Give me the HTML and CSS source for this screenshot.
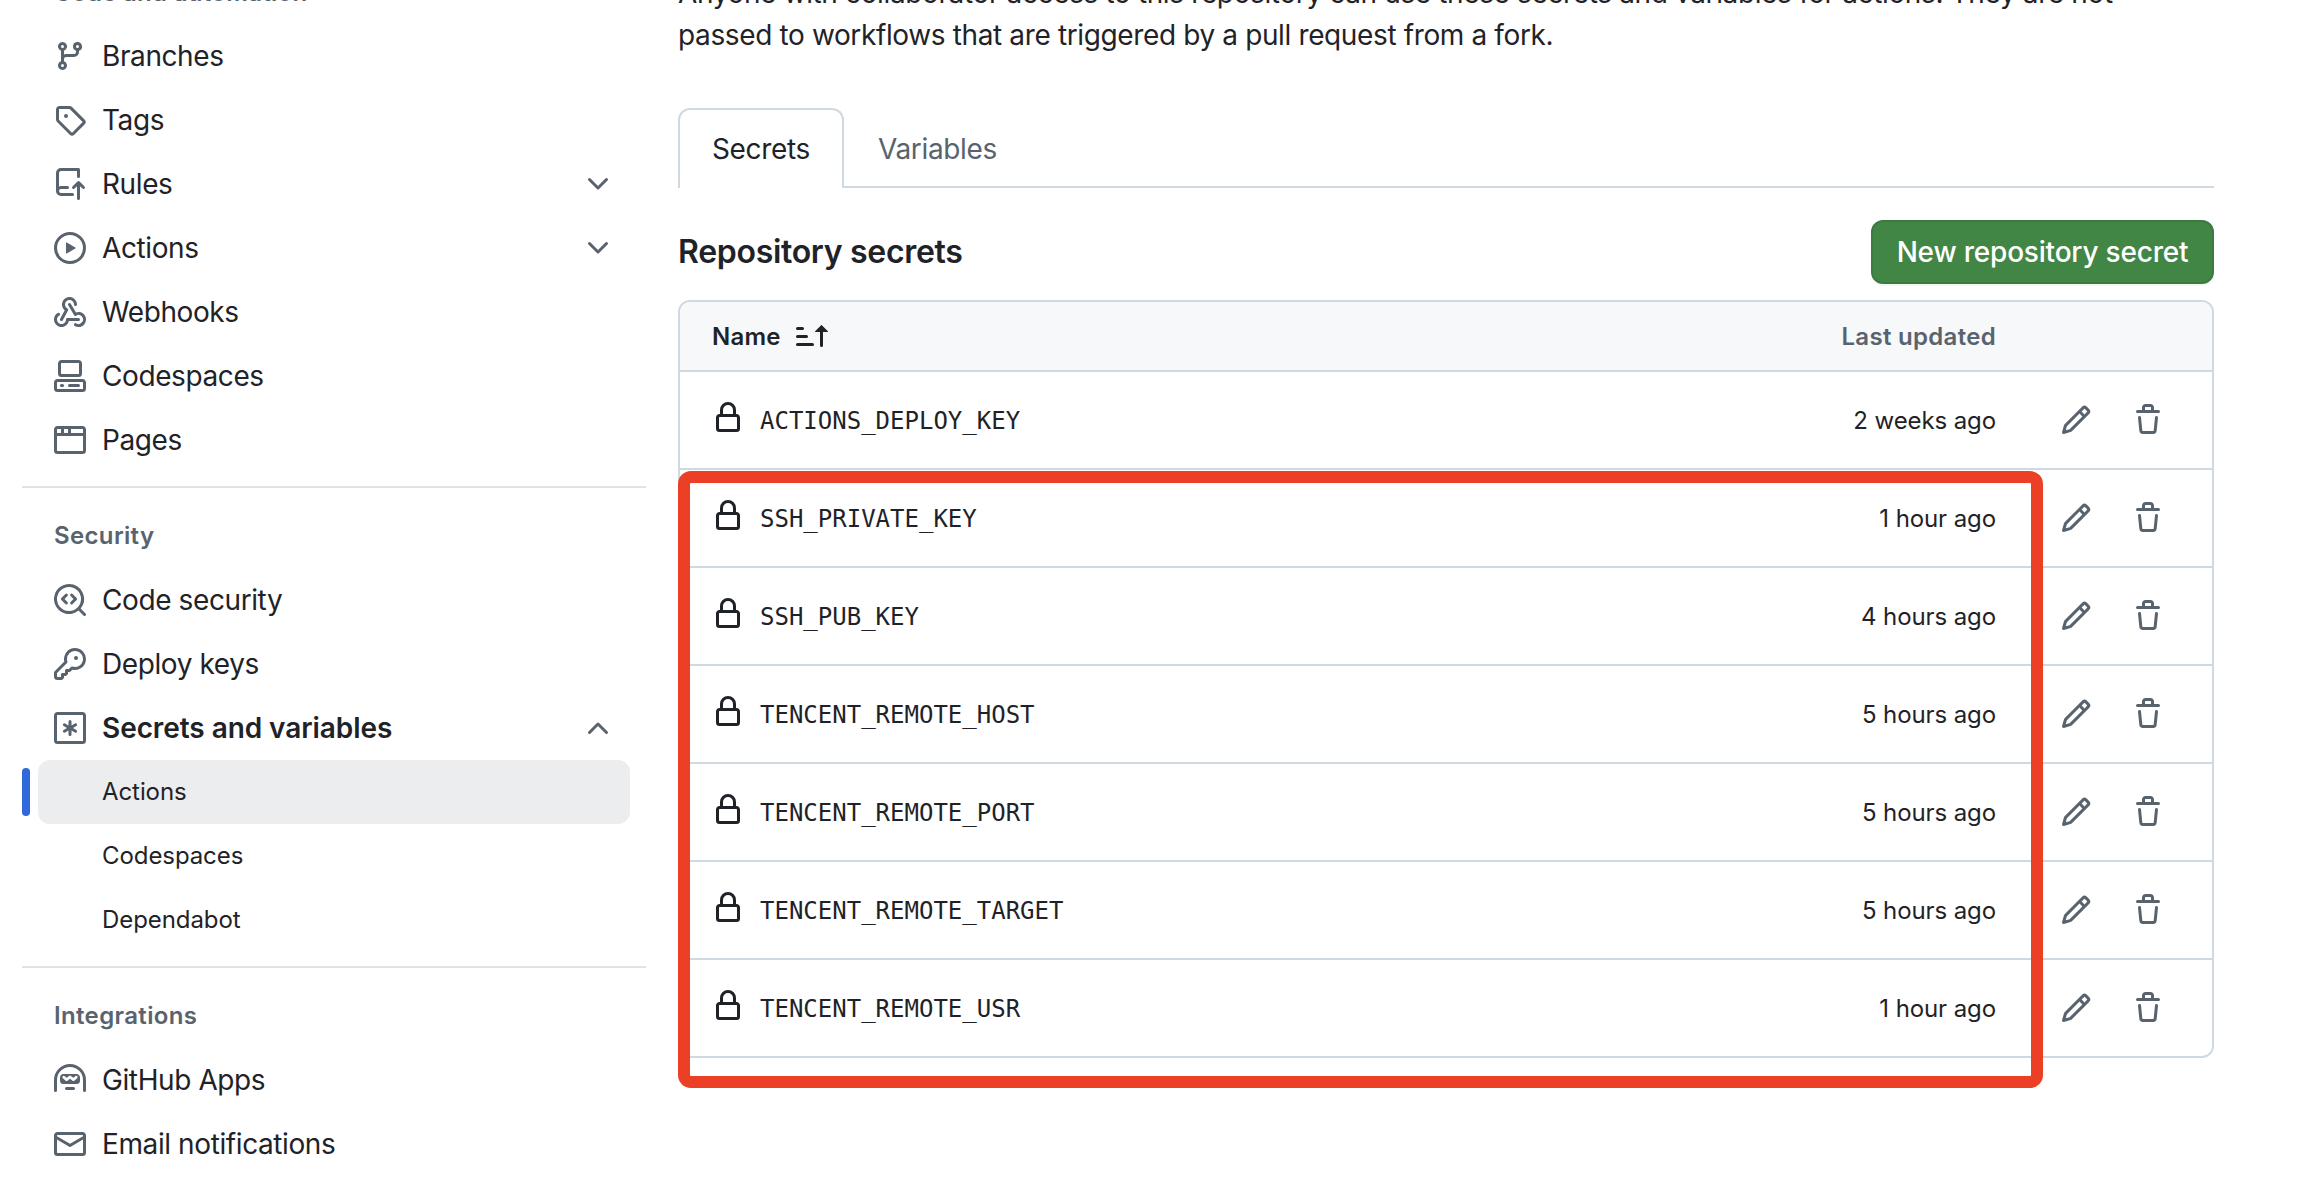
FILE: index.html
```html
<!DOCTYPE html>
<html lang="en">
<head>
<meta charset="utf-8">
<title>Actions secrets</title>
<link rel="stylesheet" href="styles.css">
</head>
<body>
<svg class="sprite" aria-hidden="true">
  <symbol id="lock" viewBox="0 0 16 16"><path d="M4 4a4 4 0 0 1 8 0v2h.25c.966 0 1.75.784 1.75 1.75v5.5A1.75 1.75 0 0 1 12.25 15h-8.500A1.750 1.750 0 0 1 2 13.250v-5.500C2 6.784 2.784 6 3.750 6H4Zm8.250 3.500h-8.500a.25.25 0 0 0-.25.25v5.500c0 .138.112.25.25.25h8.500a.25.25 0 0 0 .25-.25v-5.500a.25.25 0 0 0-.25-.25ZM10.500 6V4a2.500 2.500 0 1 0-5 0v2Z"/></symbol>
  <symbol id="pencil" viewBox="0 0 16 16"><path d="M11.013 1.427a1.750 1.750 0 0 1 2.474 0l1.086 1.086a1.750 1.750 0 0 1 0 2.474l-8.610 8.610c-.21.21-.47.364-.756.445l-3.251.93a.75.75 0 0 1-.927-.928l.929-3.250c.081-.286.235-.547.445-.758l8.610-8.610Zm.176 4.823L9.750 4.810l-6.286 6.287a.253.253 0 0 0-.064.108l-.558 1.953 1.953-.558a.253.253 0 0 0 .108-.064Zm1.238-3.763a.25.25 0 0 0-.354 0L10.811 3.750l1.439 1.440 1.263-1.263a.25.25 0 0 0 0-.354Z"/></symbol>
  <symbol id="trash" viewBox="0 0 16 16"><path d="M11 1.750V3h2.250a.75.75 0 0 1 0 1.500H2.750a.75.75 0 0 1 0-1.500H5V1.750C5 .784 5.784 0 6.750 0h2.500C10.216 0 11 .784 11 1.750ZM4.496 6.675l.66 6.600a.25.25 0 0 0 .249.225h5.190a.25.25 0 0 0 .249-.225l.66-6.600a.75.75 0 0 1 1.492.149l-.66 6.600A1.748 1.748 0 0 1 10.595 15h-5.190a1.750 1.750 0 0 1-1.741-1.575l-.66-6.600a.75.75 0 1 1 1.492-.15ZM6.500 1.750V3h3V1.750a.25.25 0 0 0-.25-.25h-2.500a.25.25 0 0 0-.25.25Z"/></symbol>
  <symbol id="chevron" viewBox="0 0 16 16"><path d="M12.780 5.220a.749.749 0 0 1 0 1.060l-4.250 4.250a.749.749 0 0 1-1.060 0L3.220 6.280a.749.749 0 1 1 1.060-1.060L8 8.939l3.720-3.719a.749.749 0 0 1 1.060 0Z"/></symbol>
</svg>

<div class="page">
  <nav class="sidebar">
    <div class="item cut"><span>Code and automation</span></div>
    <a class="item"><svg class="icon" viewBox="0 0 16 16"><path d="M9.500 3.250a2.250 2.250 0 1 1 3 2.122V6A2.500 2.500 0 0 1 10 8.500H6a1 1 0 0 0-1 1v1.128a2.251 2.251 0 1 1-1.500 0V5.372a2.250 2.250 0 1 1 1.500 0v1.836A2.493 2.493 0 0 1 6 7h4a1 1 0 0 0 1-1v-.628A2.250 2.250 0 0 1 9.500 3.250Zm-6 0a.75.75 0 1 0 1.500 0 .75.75 0 0 0-1.500 0Zm8.250-.75a.75.75 0 1 0 0 1.500.75.75 0 0 0 0-1.500ZM4.250 12a.75.75 0 1 0 0 1.500.75.75 0 0 0 0-1.500Z"/></svg><span>Branches</span></a>
    <a class="item"><svg class="icon" viewBox="0 0 16 16"><path d="M1 7.775V2.750C1 1.784 1.784 1 2.750 1h5.025c.464 0 .91.184 1.238.513l6.250 6.250a1.750 1.750 0 0 1 0 2.474l-5.026 5.026a1.750 1.750 0 0 1-2.474 0l-6.250-6.250A1.752 1.752 0 0 1 1 7.775Zm1.500 0c0 .066.026.13.073.177l6.250 6.250a.25.25 0 0 0 .354 0l5.025-5.025a.25.25 0 0 0 0-.354l-6.250-6.250a.25.25 0 0 0-.177-.073H2.750a.25.25 0 0 0-.25.25ZM6 5a1 1 0 1 1 0 2 1 1 0 0 1 0-2Z"/></svg><span>Tags</span></a>
    <a class="item"><svg class="icon" viewBox="0 0 16 16"><path d="M1 2.500A2.500 2.500 0 0 1 3.500 0h8.750a.75.75 0 0 1 .75.75v3.500a.75.75 0 0 1-1.500 0V1.500h-8a1 1 0 0 0-1 1v6.708A2.493 2.493 0 0 1 3.500 9h3.250a.75.75 0 0 1 0 1.500H3.500a1 1 0 0 0 0 2h5.750a.75.75 0 0 1 0 1.500H3.500A2.500 2.500 0 0 1 1 11.500Zm13.230 7.790-1.230-1.224v6.184a.75.75 0 0 1-1.500 0V9.066L10.280 10.290a.75.75 0 0 1-1.060-1.061l2.505-2.504a.75.75 0 0 1 1.060 0L15.290 9.230a.751.751 0 0 1-1.060 1.060Z"/></svg><span>Rules</span><svg class="icon chev"><use href="#chevron"/></svg></a>
    <a class="item"><svg class="icon" viewBox="0 0 16 16"><path d="M8 0a8 8 0 1 1 0 16A8 8 0 0 1 8 0ZM1.500 8a6.500 6.500 0 1 0 13 0 6.500 6.500 0 0 0-13 0Zm4.879-2.773 4.264 2.559a.25.25 0 0 1 0 .428l-4.264 2.559A.25.25 0 0 1 6 10.559V5.442a.25.25 0 0 1 .379-.215Z"/></svg><span>Actions</span><svg class="icon chev"><use href="#chevron"/></svg></a>
    <a class="item"><svg class="icon" viewBox="0 0 16 16"><path d="M5.500 4.250a2.250 2.250 0 0 1 4.500 0 .75.75 0 0 0 1.500 0 3.750 3.750 0 1 0-6.140 2.889l-2.272 4.258a.75.75 0 0 0 1.324.706L7 7.250a.75.75 0 0 0-.309-1.015A2.250 2.250 0 0 1 5.500 4.250Z"/><path d="M7.364 3.607a.75.75 0 0 1 1.030.257l2.608 4.349a3.750 3.750 0 1 1-.628 6.785.75.75 0 0 1 .752-1.299 2.250 2.250 0 1 0-.033-3.880.75.75 0 0 1-1.030-.256L7.107 4.636a.75.75 0 0 1 .257-1.030Z"/><path d="M2.900 8.776A.75.75 0 0 1 2.625 9.800 2.250 2.250 0 1 0 6 11.750a.75.75 0 0 1 .75-.751h5.500a.75.75 0 0 1 0 1.500H7.425a3.751 3.751 0 1 1-5.550-3.998.75.75 0 0 1 1.024.274Z"/></svg><span>Webhooks</span></a>
    <a class="item"><svg class="icon" viewBox="0 0 16 16"><path d="M0 11.250c0-.966.784-1.750 1.750-1.750h12.500c.966 0 1.750.784 1.750 1.750v3A1.750 1.750 0 0 1 14.250 16H1.750A1.750 1.750 0 0 1 0 14.250Zm2-9.500C2 .784 2.784 0 3.750 0h8.500C13.216 0 14 .784 14 1.750v5a1.750 1.750 0 0 1-1.750 1.750h-8.500A1.750 1.750 0 0 1 2 6.750Zm1.750-.25a.25.25 0 0 0-.25.25v5c0 .138.112.25.25.25h8.500a.25.25 0 0 0 .25-.25v-5a.25.25 0 0 0-.25-.25Zm-2 9.500a.25.25 0 0 0-.25.25v3c0 .138.112.25.25.25h12.500a.25.25 0 0 0 .25-.25v-3a.25.25 0 0 0-.25-.25Z"/><path d="M7 12.750a.75.75 0 0 1 .75-.75h4.500a.75.75 0 0 1 0 1.500h-4.500a.75.75 0 0 1-.75-.75Zm-4 0a.75.75 0 0 1 .75-.75h.5a.75.75 0 0 1 0 1.500h-.5a.75.75 0 0 1-.75-.75Z"/></svg><span>Codespaces</span></a>
    <a class="item"><svg class="icon" viewBox="0 0 16 16"><path d="M0 2.750C0 1.784.784 1 1.750 1h12.500c.966 0 1.750.784 1.750 1.750v10.500A1.750 1.750 0 0 1 14.250 15H1.750A1.750 1.750 0 0 1 0 13.250ZM14.500 6h-13v7.250c0 .138.112.25.25.25h12.500a.25.25 0 0 0 .25-.25Zm-6-3.500v2h6V2.750a.25.25 0 0 0-.25-.25ZM5 2.500v2h2v-2Zm-3.250 0a.25.25 0 0 0-.25.25V4.500h2v-2Z"/></svg><span>Pages</span></a>
    <div class="divider"></div>
    <h3 class="group">Security</h3>
    <a class="item"><svg class="icon" viewBox="0 0 16 16"><path d="M8.280 4.970a.749.749 0 0 1 1.060 0l2 2a.749.749 0 0 1 0 1.060l-2 2a.749.749 0 1 1-1.060-1.060L9.750 7.500 8.280 6.030a.749.749 0 0 1 0-1.060ZM6.720 6.030a.749.749 0 1 0-1.060-1.060l-2 2a.749.749 0 0 0 0 1.060l2 2a.749.749 0 1 0 1.060-1.060L5.250 7.500Z"/><path d="M7.500 0a7.500 7.500 0 0 1 5.807 12.247l2.473 2.473a.749.749 0 1 1-1.060 1.060l-2.473-2.473A7.500 7.500 0 1 1 7.500 0Zm-6 7.500a6 6 0 1 0 12 0 6 6 0 0 0-12 0Z"/></svg><span>Code security</span></a>
    <a class="item"><svg class="icon" viewBox="0 0 16 16"><path d="M10.500 0a5.499 5.499 0 1 1-1.288 10.848l-.932.932a.749.749 0 0 1-.53.22H7v.75a.749.749 0 0 1-.22.53l-.5.5a.749.749 0 0 1-.53.22H5v.75a.749.749 0 0 1-.22.53l-.5.5a.749.749 0 0 1-.53.22h-2A1.750 1.750 0 0 1 0 14.250v-2c0-.199.079-.389.22-.53l4.932-4.932A5.500 5.500 0 0 1 10.500 0Zm-4 5.500c-.001.431.069.86.205 1.269a.75.75 0 0 1-.181.768L1.500 12.560v1.690c0 .138.112.25.25.25h1.690l.06-.06v-1.190a.75.75 0 0 1 .75-.75h1.190l.06-.06v-1.190a.75.75 0 0 1 .75-.75h1.190l1.023-1.025a.75.75 0 0 1 .768-.18A4 4 0 1 0 6.500 5.500ZM11 6a1 1 0 1 1 0-2 1 1 0 0 1 0 2Z"/></svg><span>Deploy keys</span></a>
    <a class="item bold"><svg class="icon" viewBox="0 0 16 16"><path d="M0 1.750C0 .784.784 0 1.750 0h12.500C15.216 0 16 .784 16 1.750v12.500A1.750 1.750 0 0 1 14.250 16H1.750A1.750 1.750 0 0 1 0 14.250Zm1.750-.25a.25.25 0 0 0-.25.25v12.500c0 .138.112.25.25.25h12.500a.25.25 0 0 0 .25-.25V1.750a.25.25 0 0 0-.25-.25Z"/><path d="M8 4a.75.75 0 0 1 .75.75V6.700l1.690-.975a.75.75 0 0 1 .75 1.300L9.500 8l1.690.976a.75.75 0 0 1-.75 1.298L8.750 9.300v1.951a.75.75 0 0 1-1.500 0V9.299l-1.690.976a.75.75 0 0 1-.75-1.300L6.500 8l-1.690-.975a.75.75 0 0 1 .75-1.300l1.690.976V4.750A.75.75 0 0 1 8 4Z"/></svg><span>Secrets and variables</span><svg class="icon chev up"><use href="#chevron"/></svg></a>
    <a class="item sub active">Actions</a>
    <a class="item sub">Codespaces</a>
    <a class="item sub">Dependabot</a>
    <div class="divider"></div>
    <h3 class="group">Integrations</h3>
    <a class="item"><svg class="icon" viewBox="0 0 16 16"><path d="M0 8a8 8 0 1 1 16 0v5.250a.75.75 0 0 1-1.500 0V8a6.500 6.500 0 1 0-13 0v5.250a.75.75 0 0 1-1.500 0Zm5.500 4.250a.75.75 0 0 1 .75-.75h3.500a.75.75 0 0 1 0 1.500h-3.500a.75.75 0 0 1-.75-.75ZM3 6.750C3 5.784 3.784 5 4.750 5h6.500c.966 0 1.750.784 1.750 1.750v1.500A1.750 1.750 0 0 1 11.250 10h-6.500A1.750 1.750 0 0 1 3 8.250Z"/><path class="visor" d="M4.900 6.600 6.300 7.800 8 6.500 9.700 7.800 11.100 6.600"/></svg><span>GitHub Apps</span></a>
    <a class="item"><svg class="icon" viewBox="0 0 16 16"><path d="M1.750 2h12.500c.966 0 1.750.784 1.750 1.750v8.500A1.750 1.750 0 0 1 14.250 14H1.750A1.750 1.750 0 0 1 0 12.250v-8.500C0 2.784.784 2 1.750 2ZM1.500 12.251c0 .138.112.25.25.25h12.500a.25.25 0 0 0 .25-.25V5.809L8.380 9.397a.75.75 0 0 1-.76 0L1.500 5.809v6.442Zm13-8.181v-.32a.25.25 0 0 0-.25-.25H1.750a.25.25 0 0 0-.25.25v.32L8 7.880Z"/></svg><span>Email notifications</span></a>
  </nav>

  <main class="main">
    <p class="intro"><span class="line1">Anyone with collaborator access to this repository can use these secrets and variables for actions. They are not</span><br><span class="line2">passed to workflows that are triggered by a pull request from a fork.</span></p>
    <div class="tabs"><a class="tab selected">Secrets</a><a class="tab">Variables</a></div>
    <div class="heading"><h2>Repository secrets</h2><button class="new">New repository secret</button></div>
    <div class="table">
      <div class="thead"><span class="name">Name</span><svg class="icon sort" viewBox="0 0 16 16"><path d="m12.927 2.573 3 3A.25.25 0 0 1 15.750 6H13.500v6.750a.75.75 0 0 1-1.500 0V6H9.750a.25.25 0 0 1-.177-.427l3-3a.25.25 0 0 1 .354 0ZM0 12.250a.75.75 0 0 1 .75-.75h7.500a.75.75 0 0 1 0 1.500H.75a.75.75 0 0 1-.75-.75Zm0-4a.75.75 0 0 1 .75-.75h4.500a.75.75 0 0 1 0 1.500H.75A.75.75 0 0 1 0 8.250Zm0-4a.75.75 0 0 1 .75-.75h2.500a.75.75 0 0 1 0 1.500H.75A.75.75 0 0 1 0 4.250Z"/></svg><span class="updated">Last updated</span></div>
      <div class="row"><svg class="icon lock"><use href="#lock"/></svg><code>ACTIONS_DEPLOY_KEY</code><span class="when">2 weeks ago</span><svg class="icon edit"><use href="#pencil"/></svg><svg class="icon del"><use href="#trash"/></svg></div>
      <div class="row"><svg class="icon lock"><use href="#lock"/></svg><code>SSH_PRIVATE_KEY</code><span class="when">1 hour ago</span><svg class="icon edit"><use href="#pencil"/></svg><svg class="icon del"><use href="#trash"/></svg></div>
      <div class="row"><svg class="icon lock"><use href="#lock"/></svg><code>SSH_PUB_KEY</code><span class="when">4 hours ago</span><svg class="icon edit"><use href="#pencil"/></svg><svg class="icon del"><use href="#trash"/></svg></div>
      <div class="row"><svg class="icon lock"><use href="#lock"/></svg><code>TENCENT_REMOTE_HOST</code><span class="when">5 hours ago</span><svg class="icon edit"><use href="#pencil"/></svg><svg class="icon del"><use href="#trash"/></svg></div>
      <div class="row"><svg class="icon lock"><use href="#lock"/></svg><code>TENCENT_REMOTE_PORT</code><span class="when">5 hours ago</span><svg class="icon edit"><use href="#pencil"/></svg><svg class="icon del"><use href="#trash"/></svg></div>
      <div class="row"><svg class="icon lock"><use href="#lock"/></svg><code>TENCENT_REMOTE_TARGET</code><span class="when">5 hours ago</span><svg class="icon edit"><use href="#pencil"/></svg><svg class="icon del"><use href="#trash"/></svg></div>
      <div class="row"><svg class="icon lock"><use href="#lock"/></svg><code>TENCENT_REMOTE_USR</code><span class="when">1 hour ago</span><svg class="icon edit"><use href="#pencil"/></svg><svg class="icon del"><use href="#trash"/></svg></div>
      <div class="highlight"></div>
    </div>
  </main>
</div>
</body>
</html>
```
FILE: styles.css
```css
* { box-sizing: border-box; }
body { margin: 0; background: #fff; color: #1f2328; font: 28px/42px Inter, "Liberation Sans", sans-serif; overflow: hidden; }
.sprite { display: none; }
.page { display: flex; width: 2312px; height: 1182px; overflow: hidden; }
.icon { width: 32px; height: 32px; flex: none; fill: #59636e; }
.visor { fill: none; stroke: #fff; stroke-width: 1.4; stroke-linecap: round; stroke-linejoin: round; }

.sidebar { width: 624px; flex: none; margin-left: 22px; }
.item { display: flex; align-items: center; gap: 16px; height: 64px; margin: 0 16px; padding: 0 16px; border-radius: 12px; white-space: nowrap; letter-spacing: -0.4px; }
.cut { height: 64px; margin-top: -40px; padding-top: 2px; font-size: 24px; font-weight: 600; letter-spacing: 0.3px; color: #59636e; }
.bold { font-weight: 600; letter-spacing: -0.07px; }
.chev { margin-left: auto; }
.up { transform: scaleY(-1); }
.sub { padding-left: 64px; font-size: 24px; letter-spacing: -0.08px; }
.active { position: relative; background: #ecedef; }
.active::before { content: ""; position: absolute; left: -16px; top: 8px; width: 8px; height: 48px; border-radius: 6px; background: #2f68d8; }
.divider { height: 2px; margin: 14px 0 16px; background: #dfe3e8; }
.group { margin: 0; padding: 16px 32px; height: 64px; font-size: 24px; line-height: 32px; font-weight: 600; letter-spacing: 0.35px; color: #59636e; }

.main { width: 1536px; margin-left: 32px; }
.intro { margin: -28px 0 0; height: 136px; white-space: nowrap; letter-spacing: -0.37px; }
.tabs { display: flex; height: 80px; box-shadow: inset 0 -2px #d1d9e0; }
.tab { padding: 20px 32px; border: 2px solid transparent; border-bottom: 0; color: #59636e; line-height: 38px; letter-spacing: -0.35px; }
.selected { border-color: #d1d9e0; border-radius: 12px 12px 0 0; background: #fff; color: #1f2328; }
.heading { display: flex; justify-content: space-between; align-items: center; height: 64px; margin: 32px 0 16px; }
.heading h2 { margin: 0; font-size: 32px; font-weight: 600; letter-spacing: -0.3px; }
.new { width: 343px; height: 64px; padding: 0; border: 2px solid #3b7a40; border-radius: 12px; background: #428646; color: #fff; font: 500 28px/40px Inter, sans-serif; letter-spacing: -0.2px; white-space: nowrap; box-shadow: 0 2px 0 #1f23280a; }

.table { position: relative; height: 758px; border: 2px solid #d1d9e0; border-radius: 12px; font-size: 24px; }
.thead { display: flex; align-items: center; height: 70px; padding: 0 216px 0 32px; border-bottom: 2px solid #d1d9e0; border-radius: 10px 10px 0 0; background: #f6f8fa; font-weight: 600; }
.name { padding-top: 2px; letter-spacing: 0.2px; }
.sort { margin-left: 15px; fill: #1f2328; }
.updated { margin-left: auto; padding-top: 2px; color: #59636e; letter-spacing: 0.3px; }
.row { display: flex; align-items: center; height: 98px; padding: 0 48px 0 32px; border-bottom: 2px solid #d1d9e0; }
.row:nth-last-child(2) { height: 96px; border-bottom: 0; }
.lock { margin: -4px 16px 0 0; fill: #1f2328; }
code { padding-top: 2px; font: 24px/36px "DejaVu Sans Mono", monospace; }
.when { margin-left: auto; padding-top: 2px; letter-spacing: -0.1px; }
.edit { margin-left: 64px; }
.del { margin-left: 40px; }
.highlight { position: absolute; left: -2px; top: 169px; width: 1365px; height: 617px; border: 12px solid #eb4026; border-radius: 13px; }
```
